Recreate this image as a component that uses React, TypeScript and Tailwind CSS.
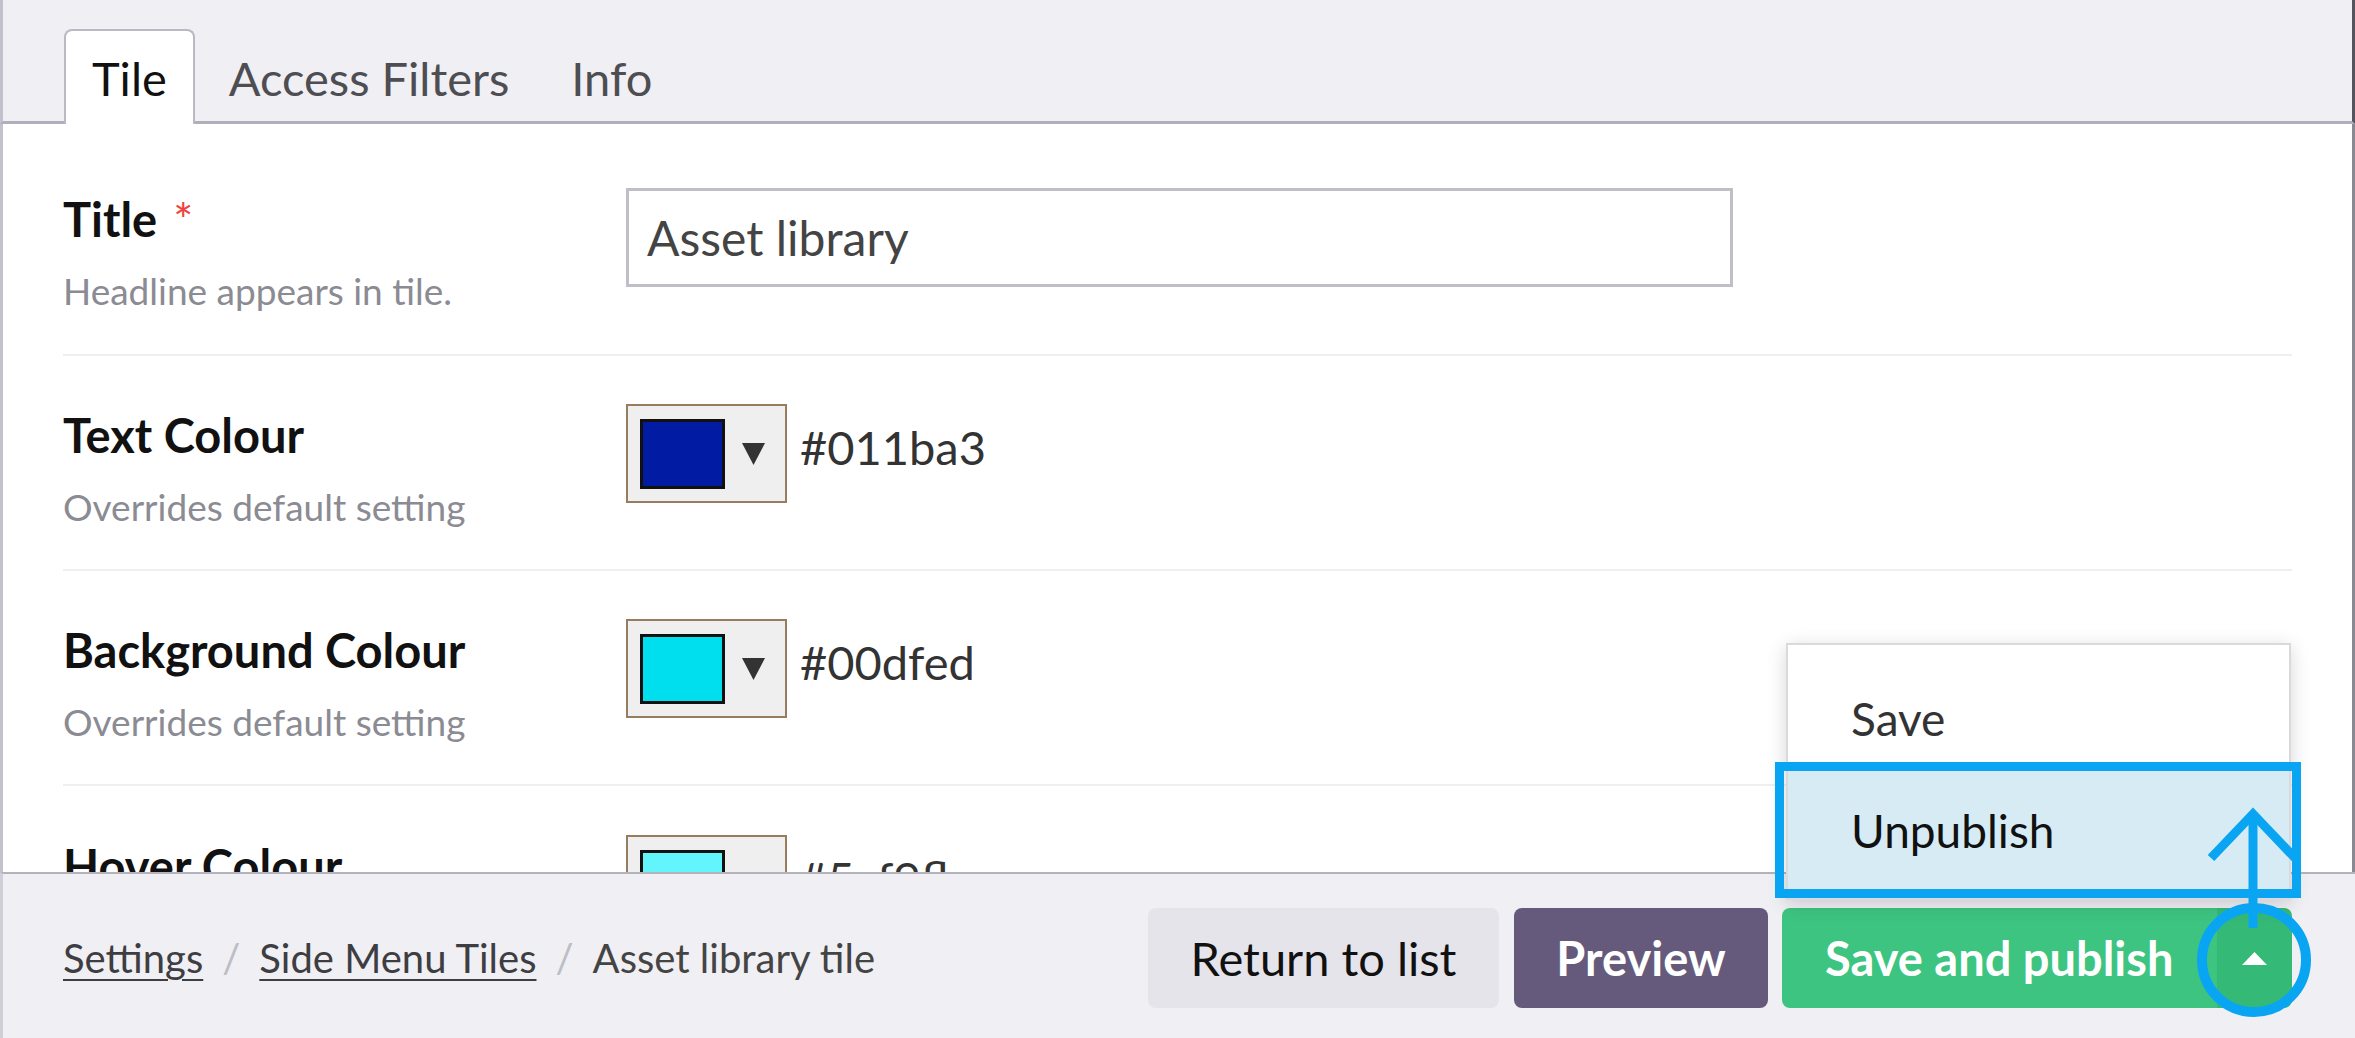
import React from "react";

function Picker({ color }: { color: string }) {
  return (
    <div className="flex h-[99px] w-[161px] shrink-0 items-center self-start border-2 border-[#977c60] bg-[#efefef] pl-[12px]">
      <div className="h-[70px] w-[85px] border-[3px] border-[#111]" style={{ backgroundColor: color }} />
      <svg width="23" height="22" viewBox="0 0 23 22" className="ml-[17px]">
        <polygon points="0,0 23,0 11.5,22" fill="#333" />
      </svg>
    </div>
  );
}

function Label({ title, desc, required }: { title: string; desc: string; required?: boolean }) {
  return (
    <div className="mt-[3px] w-[563px] shrink-0">
      <div className="text-[47px] font-bold leading-[1.2] text-[#111]">
        {title}
        {required && <span className="ml-[16px] font-normal text-[#f0413d]">*</span>}
      </div>
      <div className="mt-[22px] text-[37px] leading-[1.2] text-[#8b8b93]">{desc}</div>
    </div>
  );
}

export default function App() {
  return (
    <div className="relative flex h-[1038px] w-[2355px] flex-col overflow-hidden bg-white font-['Lato',sans-serif]">
      {/* Tabs bar */}
      <div className="flex h-[124px] shrink-0 items-end border-b-[3px] border-l-[3px] border-r-[3px] border-b-[#b0afbb] border-l-[#c3c2cc] border-r-[#55545c] bg-[#f0eff4] pl-[61px]">
        <div className="relative z-10 -mb-[3px] h-[95px] rounded-t-[8px] border-2 border-b-0 border-[#b9b8c4] bg-white px-[26px] pt-[19px] text-[47px] leading-[1.2] text-[#111]">
          Tile
        </div>
        <div className="-mb-[3px] h-[95px] pl-[34px] pr-[30px] pt-[21px] text-[47px] leading-[1.2] text-[#4d4d52]">
          Access Filters
        </div>
        <div className="-mb-[3px] h-[95px] px-[32px] pt-[21px] text-[47px] leading-[1.2] text-[#4d4d52]">
          Info
        </div>
      </div>

      {/* Content */}
      <div className="flex-1 overflow-hidden border-l-[3px] border-r-[3px] border-l-[#c3c2cc] border-r-[#8a8991] px-[60px]">
        <div className="flex h-[232px] items-start border-b-2 border-[#efeff3] pt-[64px]">
          <Label title="Title" desc="Headline appears in tile." required />
          <div className="flex h-[99px] w-[1107px] items-center border-[3px] border-[#c0bfc8] pl-[18px] text-[48px] text-[#444]">
            Asset library
          </div>
        </div>
        <div className="flex h-[215px] items-start border-b-2 border-[#efeff3] pt-[48px]">
          <Label title="Text Colour" desc="Overrides default setting" />
          <Picker color="#011ba3" />
          <div className="ml-[13px] mt-[15px] text-[47px] leading-[1.2] text-[#333]">#011ba3</div>
        </div>
        <div className="flex h-[215px] items-start border-b-2 border-[#efeff3] pt-[48px]">
          <Label title="Background Colour" desc="Overrides default setting" />
          <Picker color="#00dfed" />
          <div className="ml-[13px] mt-[15px] text-[47px] leading-[1.2] text-[#333]">#00dfed</div>
        </div>
        <div className="flex h-[215px] items-start pt-[49px]">
          <Label title="Hover Colour" desc="Overrides default setting" />
          <Picker color="#62f5fb" />
          <div className="ml-[13px] mt-[15px] text-[47px] leading-[1.2] text-[#333]">#5cf9fb</div>
        </div>
      </div>

      {/* Footer */}
      <div className="flex h-[166px] shrink-0 items-start justify-between border-l-[3px] border-t-2 border-l-[#d0cfd8] border-t-[#b3b2bd] bg-[#f0eff4] pl-[60px] pr-[63px] pt-[34px]">
        <div className="flex h-[100px] items-center text-[40px] text-[#3d3d42]">
          <span className="underline decoration-2 underline-offset-[6px]">Settings</span>
          <span className="mx-[19px] text-[#bdbdc4]">/</span>
          <span className="underline decoration-2 underline-offset-[6px]">Side Menu Tiles</span>
          <span className="mx-[19px] text-[#bdbdc4]">/</span>
          <span className="text-[#444]">Asset library tile</span>
        </div>
        <div className="flex items-center">
          <div className="flex h-[100px] w-[351px] items-center justify-center rounded-[8px] bg-[#e5e4ea] text-[47px] text-[#111]">
            Return to list
          </div>
          <div className="ml-[15px] flex h-[100px] w-[254px] items-center justify-center rounded-[8px] bg-[#655a7b] text-[47px] font-bold text-white">
            Preview
          </div>
          <div className="ml-[14px] flex h-[100px] w-[510px] overflow-hidden rounded-[8px]">
            <div className="flex w-[435px] items-center bg-[#3dc480] pl-[43px] text-[47px] font-bold text-white">
              Save and publish
            </div>
            <div className="flex w-[75px] items-center justify-center bg-[#35b976]">
              <svg width="25" height="13" viewBox="0 0 25 13">
                <polygon points="0,13 25,13 12.5,0" fill="#fff" />
              </svg>
            </div>
          </div>
        </div>
      </div>

      {/* Dropdown menu */}
      <div className="absolute left-[1786px] top-[643px] w-[505px] border-2 border-[#d9d9de] bg-white pb-[8px] shadow-[0_4px_18px_rgba(0,0,0,0.16)]">
        <div className="h-[125px] pl-[63px] pt-[46px] text-[46px] leading-[1.2] text-[#333]">Save</div>
        <div className="h-[120px] bg-[#d6ebf4] pl-[63px] pt-[33px] text-[46px] leading-[1.2] text-[#111]">Unpublish</div>
      </div>

      {/* Annotation overlay */}
      <svg className="pointer-events-none absolute left-0 top-0" width="2355" height="1038" viewBox="0 0 2355 1038">
        <rect x="1779.5" y="766.5" width="517" height="127" fill="none" stroke="#0aa5f2" strokeWidth="9" />
        <line x1="2253" y1="928" x2="2253" y2="818" stroke="#0aa5f2" strokeWidth="9" />
        <polyline points="2211,858 2253,814 2295,858" fill="none" stroke="#0aa5f2" strokeWidth="9" />
        <ellipse cx="2254" cy="960" rx="52" ry="52" fill="none" stroke="#0aa5f2" strokeWidth="10" />
      </svg>
    </div>
  );
}
